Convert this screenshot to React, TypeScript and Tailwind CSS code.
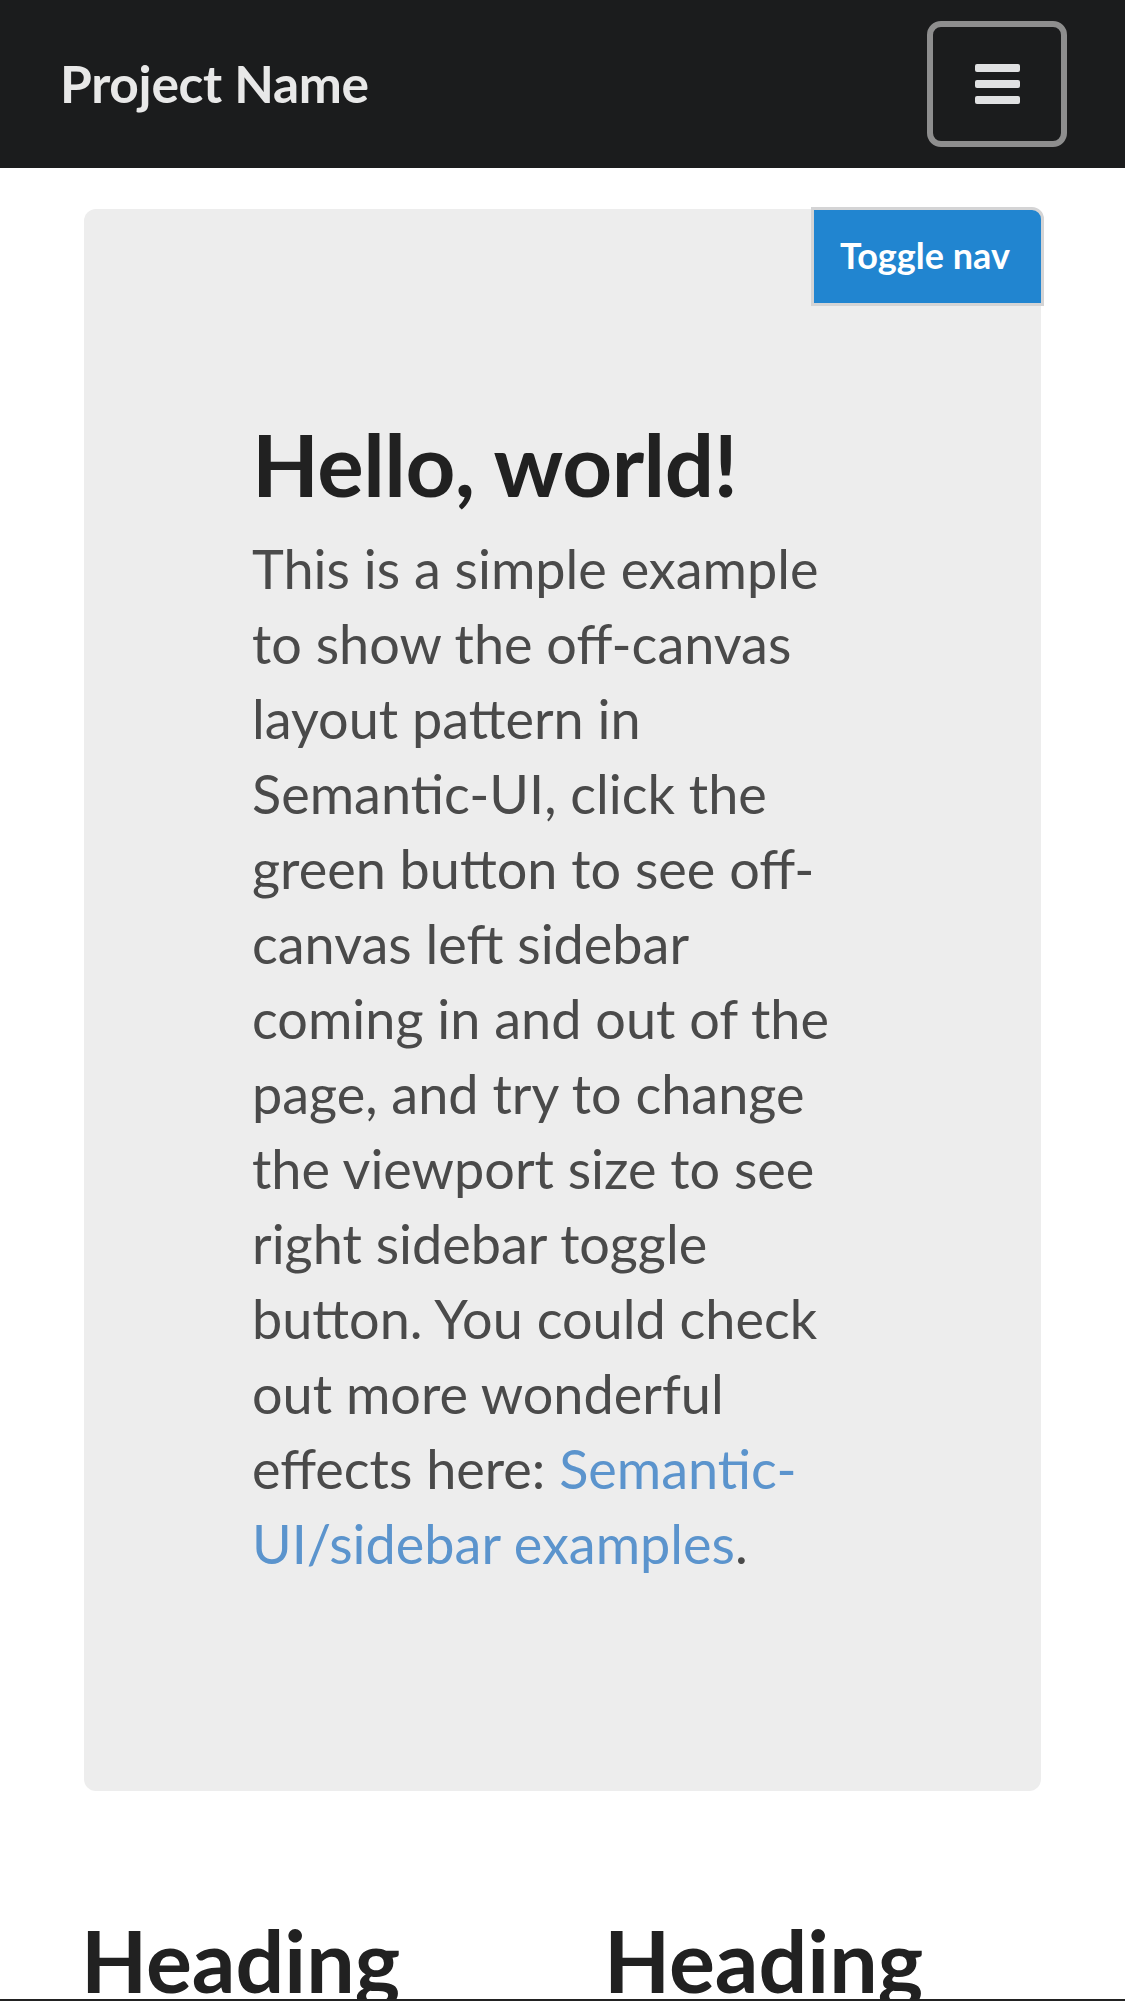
export default function App() {
  return (
    <div className="min-h-[2001px] bg-white font-['Lato','Liberation_Sans',sans-serif]">
      <nav className="h-[168px] bg-[#1b1c1d] flex items-center justify-between pl-[60px] pr-[58px]">
        <span className="text-[51.5px] font-bold text-[#e8e8e8] leading-none tracking-[-0.3px]">Project Name</span>
        <button className="w-[140px] h-[126px] rounded-[14px] border-[6px] border-[#8e8e8e] flex flex-col items-center justify-center gap-[8px]">
          <span className="block w-[45px] h-[8px] rounded-[2px] bg-[#e0e1e2]" />
          <span className="block w-[45px] h-[8px] rounded-[2px] bg-[#e0e1e2]" />
          <span className="block w-[45px] h-[8px] rounded-[2px] bg-[#e0e1e2]" />
        </button>
      </nav>

      <main className="px-[84px] pt-[41px]">
        <section className="relative bg-[#ededed] rounded-[12px] pl-[168px] pr-[198px] pt-[205px] pb-[210px]">
          <button className="absolute -top-[2px] -right-[3px] w-[233px] h-[99px] bg-[#2185d0] border-[3px] border-[#d4d4d5] rounded-tr-[12px] text-white font-bold text-[36px] leading-none pb-[4px] pr-[5px]">
            Toggle nav
          </button>
          <h1 className="text-[87px] font-bold text-[#212121] leading-[1.15] tracking-[-0.5px]">Hello, world!</h1>
          <p className="mt-[17px] text-[54px] leading-[75px] text-[#4a4a4a]">
            This is a simple example to show the off-canvas layout pattern in Semantic-UI, click the green button to see off-canvas left sidebar coming in and out of the page, and try to change the viewport size to see right sidebar toggle button. You could check out more wonderful effects here:{" "}
            <a href="#" className="text-[#5b94cd]">Semantic-UI/sidebar examples</a>.
          </p>
        </section>

        <div className="grid grid-cols-2 gap-x-[86px] pt-[120px] -ml-[3px]">
          <h2 className="text-[86px] font-bold text-[#212121] leading-[1.15]">Heading</h2>
          <h2 className="text-[86px] font-bold text-[#212121] leading-[1.15]">Heading</h2>
        </div>
      </main>
      <div className="fixed left-0 right-0 bottom-0 h-[2px] bg-[#222]" />
    </div>
  );
}
